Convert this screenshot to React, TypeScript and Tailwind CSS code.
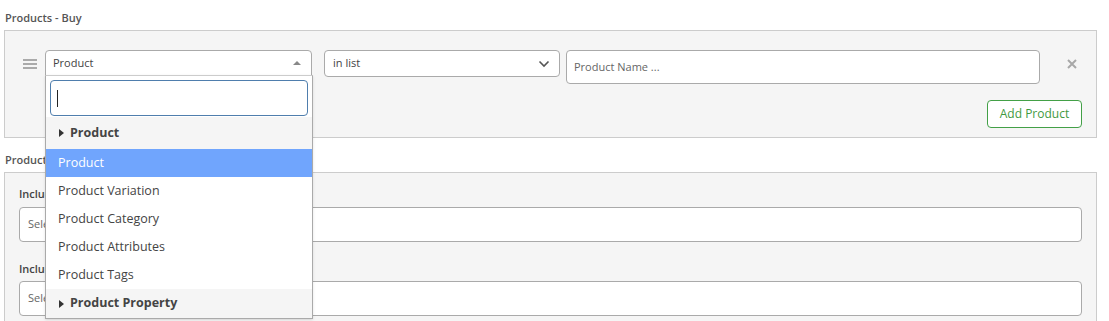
const font = { fontFamily: '"Open Sans", "Noto Sans", sans-serif' }

const options = ['Product Variation', 'Product Category', 'Product Attributes', 'Product Tags']

export default function App() {
  return (
    <div className="w-[1109px] h-[321px] overflow-hidden bg-white pl-[4px] pr-[12px]" style={font}>
      <div className="pt-[10px] pl-[1px] text-[11px] leading-4 font-semibold text-[#555]">Products - Buy</div>

      <div className="mt-[4px] border border-[#ccc] bg-[#f5f5f5] pl-[18px] pr-[14px] pt-[19px] pb-[9px]">
        <div className="flex items-start">
          <DragHandle />
          <div className="relative ml-[8px] z-10">
            <div className="w-[267px] h-[26px] bg-white border border-[#aaa] rounded-t-[4px] flex items-center pl-[7px] pr-[8px] text-[11px] text-[#444]">
              <span className="flex-1">Product</span>
              <span className="w-0 h-0 border-l-[4px] border-r-[4px] border-b-[4px] border-l-transparent border-r-transparent border-b-[#888] mr-[2px]" />
            </div>
            <div className="absolute left-0 top-[25px] w-[268px] bg-white border border-[#aaa] border-t-[#ccc] shadow-sm">
              <div className="pt-[4px] px-[4px] pb-[1px]">
                <div className="h-[36px] rounded-[4px] border border-[#4f7ead] flex items-center pl-[6px]">
                  <span className="block w-[1px] h-[17px] bg-[#222]" />
                </div>
              </div>
              <GroupRow label="Product" h="h-[32px]" />
              <div className="h-[28px] bg-[#70a5fd] text-white text-[12.5px] flex items-center pl-[12px]">Product</div>
              {options.map((o) => (
                <div key={o} className="h-[28px] text-[12.5px] text-[#444] flex items-center pl-[12px]">
                  {o}
                </div>
              ))}
              <GroupRow label="Product Property" h="h-[29px]" />
            </div>
          </div>

          <div className="ml-[12px] w-[236px] h-[27px] bg-white border border-[#aaa] rounded-[4px] flex items-center pl-[8px] pr-[9px] text-[11px] text-[#444]">
            <span className="flex-1">in list</span>
            <svg width="12" height="8" viewBox="0 0 12 8">
              <path d="M1.5 1.5 L6 6 L10.5 1.5" fill="none" stroke="#555" strokeWidth="1.6" />
            </svg>
          </div>

          <div className="ml-[6px] w-[474px] h-[34px] bg-white border border-[#aaa] rounded-[4px] flex items-center pl-[7px] text-[11px] text-[#666]">
            Product Name ...
          </div>

          <div className="pl-[27px] pt-[9px]">
            <svg width="10" height="10" viewBox="0 0 10 10">
              <path d="M1 1 L9 9 M9 1 L1 9" stroke="#a8a8a8" strokeWidth="2" />
            </svg>
          </div>
        </div>

        <div className="flex justify-end mt-[16px]">
          <button className="w-[95px] h-[28px] border border-[#43a047] rounded-[4px] bg-white text-[#3f9a3f] text-[12px]">
            Add Product
          </button>
        </div>
      </div>

      <div className="mt-[14px] pl-[1px] text-[11px] leading-4 font-semibold text-[#555]">Products - Get</div>

      <div className="mt-[4px] border border-[#ccc] bg-[#f5f5f5] pl-[14px] pr-[14px] pt-[13px] h-[160px]">
        <div className="text-[11px] leading-4 font-semibold text-[#444]">Include Products</div>
        <div className="mt-[5px] h-[35px] bg-white border border-[#aaa] rounded-[4px] flex items-center pl-[8px] text-[11px] text-[#666]">
          Select products
        </div>
        <div className="mt-[19px] text-[11px] leading-4 font-semibold text-[#444]">Include Categories</div>
        <div className="mt-[4px] h-[35px] bg-white border border-[#aaa] rounded-[4px] flex items-center pl-[8px] text-[11px] text-[#666]">
          Select categories
        </div>
      </div>
    </div>
  )
}

function GroupRow({ label, h }: { label: string; h: string }) {
  return (
    <div className={`${h} bg-[#f5f5f5] flex items-center pl-[13px] text-[12.5px] font-bold text-[#444]`}>
      <span className="w-0 h-0 border-t-[4px] border-b-[4px] border-l-[5px] border-t-transparent border-b-transparent border-l-[#333] mr-[6px]" />
      {label}
    </div>
  )
}

function DragHandle() {
  return (
    <div className="mt-[9px] w-[14px] flex flex-col gap-[2px]">
      <span className="block h-[2px] bg-[#aaa]" />
      <span className="block h-[2px] bg-[#aaa]" />
      <span className="block h-[2px] bg-[#aaa]" />
    </div>
  )
}
